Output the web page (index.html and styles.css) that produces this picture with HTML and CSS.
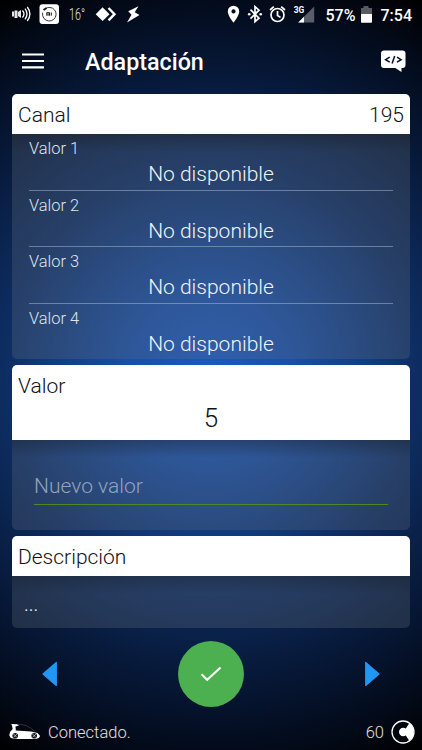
FILE: index.html
```html
<!DOCTYPE html>
<html lang="es">
<head>
<meta charset="utf-8">
<title>Adaptación</title>
<link rel="stylesheet" href="styles.css">
</head>
<body>
<div class="screen">
  <div class="status">
    <svg class="status-left" width="145" height="28" viewBox="0 0 145 28" fill="#fff">
      <path d="M12 11.500h2v5h-2zM14.500 10.500h3v7.500h-3zM18 12l3-2v8l-3-2z" opacity=".9"/>
      <g fill="none" stroke="#fff" stroke-width="1.300"><path d="M22.500 10.500q3 3.500 0 7M25 8.700q4 5.300 0 10.600M27.300 7q5.200 7 0 14"/></g>
      <rect x="39.500" y="4.200" width="19.500" height="19.800" rx="3"/>
      <circle cx="49.300" cy="14.200" r="6.800" fill="none" stroke="#333" stroke-width=".9" stroke-dasharray="38 4.700" transform="rotate(-130 49.300 14.200)"/>
      <path d="M43.500 10l3-2" stroke="#111" stroke-width="1.800"/>
      <path d="M46.800 15.700v-3h2.700v3M48.100 13.500v2.200M51.300 12.500v3.200" fill="none" stroke="#111" stroke-width="1"/>
      <text class="temp" x="69" y="19.500" textLength="16" lengthAdjust="spacingAndGlyphs">16°</text>
      <path d="M102.600 7.300l6.900 6.900-6.900 6.900-6.900-6.900z"/>
      <path d="M108.500 8l6 6.200-6 6.200" fill="none" stroke="#fff" stroke-width="2.400"/>
      <path d="M138.500 6.200L128.200 11.300l3.300 3.500-4.500 7.700 12.500-7.500-4.800-2.800z"/>
    </svg>
    <svg class="status-right" width="200" height="28" viewBox="220 0 200 28" fill="#fff">
      <path fill-rule="evenodd" d="M233.500 5.700a5.700 5.700 0 0 0-5.700 5.700c0 4.200 5.700 11.200 5.700 11.200s5.700-7 5.700-11.200a5.700 5.700 0 0 0-5.700-5.700zm0 3.600a2.100 2.100 0 1 1 0 4.200 2.100 2.100 0 0 1 0-4.200z"/>
      <path d="M250.500 9.700l8.500 8.500-4 3.500V6.700l4 3.500-8.500 8.500" fill="none" stroke="#fff" stroke-width="1.700"/>
      <circle cx="249.200" cy="14.200" r="1.300"/><circle cx="260.700" cy="14.200" r="1.300"/>
      <g fill="none" stroke="#fff" stroke-width="1.700"><circle cx="277.500" cy="15" r="6.500"/><path d="M277.500 11v4.500l3 1.900M270 10l3.800-3.300M285 10l-3.800-3.300"/></g>
      <path d="M314.200 6.500v16h-16z" opacity=".34"/>
      <path d="M304 16.700v5.800h-5.800z"/>
      <text class="net" x="293.700" y="13" textLength="10.500" lengthAdjust="spacingAndGlyphs">3G</text>
      <text class="stat" x="325.500" y="20.500" textLength="30" lengthAdjust="spacingAndGlyphs">57%</text>
      <path d="M361 8h2.500V6h5v2h3.500v6h-11z" opacity=".34"/>
      <path d="M361 14h11v8a.7.7 0 0 1-.7.700h-9.600a.7.7 0 0 1-.7-.7z"/>
      <text class="stat" x="380.500" y="20.500" textLength="31.500" lengthAdjust="spacingAndGlyphs">7:54</text>
    </svg>
  </div>
  <header class="appbar">
    <svg class="menu" width="22" height="16" viewBox="0 0 22 16"><path d="M0 1.500h22M0 8h22M0 14.300h22" stroke="#fff" stroke-width="2.200"/></svg>
    <h1>Adaptación</h1>
    <svg class="code" width="25" height="23" viewBox="0 0 25 23">
      <path d="M3 0.500h18.500a3 3 0 0 1 3 3V15a3 3 0 0 1-3 3h-1V22l-6.200-4H3a3 3 0 0 1-3-3V3.500a3 3 0 0 1 3-3z" fill="#fff"/>
      <path d="M8.700 7.200L4.600 9.700l4.100 2.500M16 7.200l4.100 2.500-4.100 2.500M13.700 6l-2.600 7.600" fill="none" stroke="#061126" stroke-width="1.500"/>
    </svg>
  </header>
  <main>
    <section class="card channel">
      <div class="head"><span>Canal</span><span>195</span></div>
      <div class="body rows">
        <div class="row"><label>Valor 1</label><p>No disponible</p></div>
        <div class="row"><label>Valor 2</label><p>No disponible</p></div>
        <div class="row"><label>Valor 3</label><p>No disponible</p></div>
        <div class="row"><label>Valor 4</label><p>No disponible</p></div>
      </div>
    </section>
    <section class="card value">
      <div class="head tall"><span>Valor</span><strong>5</strong></div>
      <div class="body entry"><div class="field">Nuevo valor</div></div>
    </section>
    <section class="card description">
      <div class="head"><span>Descripción</span></div>
      <div class="body note">...</div>
    </section>
  </main>
  <nav class="actions">
    <svg width="16" height="26" viewBox="0 0 16 26"><path d="M14.300 1.500v23L1 13z" fill="#2196f3" stroke="#2196f3" stroke-linejoin="round" stroke-width="1.200"/></svg>
    <div class="confirm"><svg width="22" height="16" viewBox="0 0 22 16"><path d="M1.500 8.200l5.700 5.600L20.500 1.500" fill="none" stroke="#fff" stroke-width="2.200"/></svg></div>
    <svg width="16" height="26" viewBox="0 0 16 26"><path d="M1.700 1.500v23L15 13z" fill="#2196f3" stroke="#2196f3" stroke-linejoin="round" stroke-width="1.200"/></svg>
  </nav>
  <footer>
    <svg width="32" height="18" viewBox="0 0 32 18">
      <path d="M3 2.700L2.300 1 8.500 1.200l1.500 1.300L6.500 3.500 6.800 7.500l15.200 1 6.500 1.600 2.700 3-1.400 1.800-3 1.200-20-.2-5-1L.3 12.500 1 9l2.700-3z" fill="#fff"/>
      <path d="M8.500 1.600q9-1.200 17.500 7" fill="none" stroke="#444" stroke-width=".7"/>
      <circle cx="6.200" cy="12.700" r="2.800" fill="#11151c"/><circle cx="25.200" cy="12.700" r="2.800" fill="#11151c"/>
      <path d="M4.500 11l3.400 3.400M7.900 11l-3.400 3.400M23.500 11l3.400 3.400M26.900 11l-3.400 3.400" stroke="#fff" stroke-width=".6"/>
    </svg>
    <span class="state">Conectado.</span>
    <span class="count">60</span>
    <svg width="24" height="24" viewBox="0 0 24 24">
      <circle cx="12" cy="12" r="11" fill="none" stroke="#fff" stroke-width="1.300"/>
      <path d="M18.300 3.200a11 11 0 0 1 0 17.600L14.800 15.500V8.500z" fill="#fff"/>
      <circle cx="12.200" cy="12" r="4.200" fill="#fff"/>
    </svg>
  </footer>
</div>
</body>
</html>
```
FILE: styles.css
```css
* { box-sizing: border-box; }
body { margin: 0; background: #000; font-family: Roboto, sans-serif; font-weight: 300; }
.screen {
  width: 422px; height: 750px; overflow: hidden;
  display: flex; flex-direction: column;
  background: radial-gradient(circle at 50% 50%, #1b59c2 0, #184fa8 80px, #123c80 155px, #0d2c60 210px, #091f45 270px, #05132d 330px, #030b1b 375px, #000 430px);
}
.status { height: 28px; display: flex; justify-content: space-between; padding-right: 2px; flex: none; }
.temp { font-size: 16.500px; font-weight: 300; fill: #e0e0e0; }
.net { font-size: 9.5px; font-weight: 700; }
.stat { font-size: 17px; font-weight: 500; }
.appbar { height: 66px; flex: none; display: flex; align-items: center; padding: 0 16px 0 22px; }
.menu { margin-top: -1px; }
.appbar h1 { margin: 2px 0 0 41px; flex: 1; font-size: 23.300px; line-height: 30px; font-weight: 500; color: #fff; }
main { padding: 0 12px; display: flex; flex-direction: column; gap: 6px; flex: none; }
.card { border-radius: 5px; overflow: hidden; background: rgba(98, 108, 124, .3); display: flex; flex-direction: column; }
.channel { height: 265px; }
.value { height: 165px; }
.description { height: 92px; }
.head { flex: none; height: 40px; background: #fff; color: #111; display: flex; justify-content: space-between; align-items: center; padding: 1px 6px 0; font-size: 21px; line-height: 26px; }
.tall { height: 75px; flex-direction: column; justify-content: flex-start; align-items: stretch; padding-top: 8px; }
.tall strong { font-size: 26px; line-height: 32px; margin-top: 3px; font-weight: 300; text-align: center; }
.body { flex: 1; color: #f1f4f8; background: linear-gradient(rgba(24, 29, 37, .38), rgba(24, 29, 37, 0) 18px); }
.rows { padding: 0 17px; }
.row { height: 56.600px; border-bottom: 1px solid rgba(180, 190, 210, .5); padding-top: 5px; }
.row:last-child { border: 0; }
.row label { display: block; font-size: 16.400px; line-height: 20px; color: #dfe5ee; }
.row p { margin: 2px 0 0; font-size: 21px; line-height: 27px; text-align: center; }
.entry { padding: 29px 22px 0; }
.field { height: 35.500px; border-bottom: 1.500px solid #4a8a20; padding-top: 4px; font-size: 21px; line-height: 26px; color: #92a2c0; }
.note { padding: 15px 12px; font-size: 20px; line-height: 26px; }
.actions { height: 92px; flex: none; display: flex; justify-content: space-between; align-items: center; padding: 0 42px; }
.confirm { width: 66px; height: 66px; border-radius: 50%; background: #4caf50; display: flex; align-items: center; justify-content: center; }
footer { height: 30px; flex: none; display: flex; align-items: center; padding: 0 7px 7px 9px; color: #e0e0e0; font-size: 16.500px; line-height: 22px; }
footer .state { margin: 2px 0 0 7px; flex: 1; }
footer .count { margin: 2px 7px 0 0; }
```
